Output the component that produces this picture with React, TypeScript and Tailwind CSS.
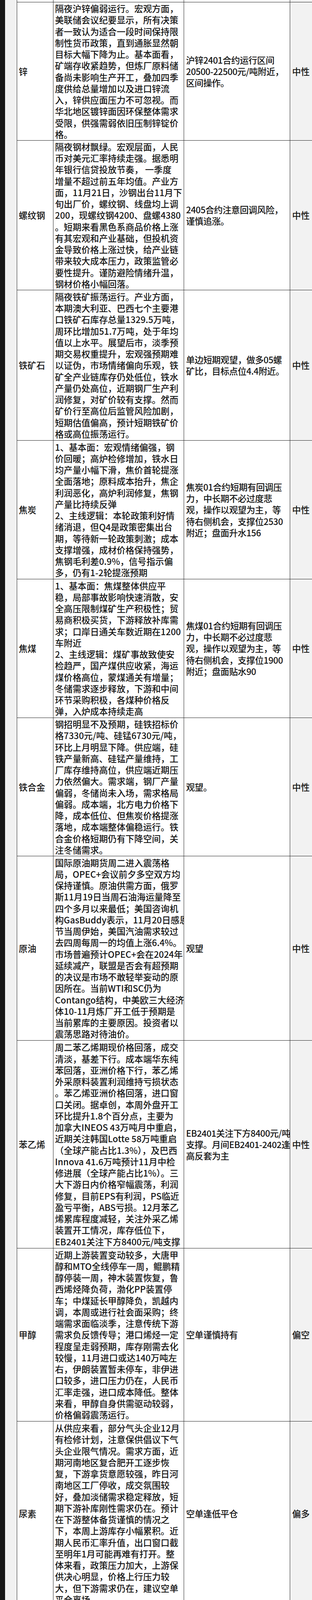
type Row = {
  name: string;
  h: string;
  analysis: string[];
  strategy: string[];
  view: string;
};

const rows: Row[] = [
  {
    name: "锌",
    h: "h-[354px]",
    analysis: [
      "隔夜沪锌偏弱运行。宏观方面，",
      "美联储会议纪要显示，所有决策",
      "者一致认为适合一段时间保持限",
      "制性货币政策，直到通胀显然朝",
      "目标大幅下降为止。基本面看，",
      "矿端存收紧趋势，但炼厂原料储",
      "备尚未影响生产开工，叠加四季",
      "度供给总量增加以及进口锌流",
      "入，锌供应面压力不可忽视。而",
      "华北地区镀锌面因环保整体需求",
      "受限，供强需弱依旧压制锌锭价",
      "格。",
    ],
    strategy: ["沪锌2401合约运行区间", "20500-22500元/吨附近，", "区间操作。"],
    view: "中性",
  },
  {
    name: "螺纹钢",
    h: "h-[383px]",
    analysis: [
      "隔夜钢材飘绿。宏观层面，人民",
      "币对美元汇率持续走强。据悉明",
      "年银行信贷投放节奏， 一季度",
      "增量不超过前五年均值。产业方",
      "面，11月21日，沙钢出台11月下",
      "旬出厂价，螺纹钢、线盘均上调",
      "200，现螺纹钢4200、盘螺4380",
      "。短期来看黑色系商品价格上涨",
      "有其宏观和产业基础，但投机资",
      "金导致价格上涨过快，给产业链",
      "带来较大成本压力，政策监管必",
      "要性提升。谨防避险情绪升温，",
      "钢材价格小幅回落。",
    ],
    strategy: ["2405合约注意回调风险，", "谨慎追涨。"],
    view: "中性",
  },
  {
    name: "铁矿石",
    h: "h-[385px]",
    analysis: [
      "隔夜铁矿振荡运行。产业方面，",
      "本期澳大利亚、巴西七个主要港",
      "口铁矿石库存总量1329.5万吨，",
      "周环比增加51.7万吨，处于年均",
      "值以上水平。展望后市，淡季预",
      "期交易权重提升，宏观强预期难",
      "以证伪，市场情绪偏向乐观，铁",
      "矿全产业链库存仍处低位，铁水",
      "产量仍处高位，近期钢厂生产利",
      "润修复，对矿价较有支撑。然而",
      "矿价行至高位后监管风险加剧，",
      "短期估值偏高，预计短期铁矿价",
      "格或高位振荡运行。",
    ],
    strategy: ["单边短期观望，做多05螺", "矿比，目标点位4.4附近。"],
    view: "中性",
  },
  {
    name: "焦炭",
    h: "h-[355px]",
    analysis: [
      "1、基本面：宏观情绪偏强，钢",
      "价回暖；高炉检修增加，铁水日",
      "均产量小幅下滑，焦价首轮提涨",
      "全面落地；原料成本抬升，焦企",
      "利润恶化，高炉利润修复，焦钢",
      "产量比持续反弹",
      "2、主线逻辑：本轮政策利好情",
      "绪消退，但Q4是政策密集出台",
      "期，等待新一轮政策刺激；成本",
      "支撑增强，成材价格保持强势，",
      "焦钢毛利差0.9%，信号指示偏",
      "多，仍有1-2轮提涨预期",
    ],
    strategy: [
      "焦炭01合约短期有回调压",
      "力，中长期不必过度悲",
      "观，操作以观望为主，等",
      "待右侧机会，支撑位2530",
      "附近；盘面升水156",
    ],
    view: "中性",
  },
  {
    name: "焦煤",
    h: "h-[355px]",
    analysis: [
      "1、基本面：焦煤整体供应平",
      "稳，局部事故影响快速消散，安",
      "全高压限制煤矿生产积极性；贸",
      "易商积极买货，下游释放补库需",
      "求；口岸日通关车数近期在1200",
      "车附近",
      "2、主线逻辑：煤矿事故致使安",
      "检趋严，国产煤供应收紧，海运",
      "煤价格高位，蒙煤通关有增量；",
      "冬储需求逐步释放，下游和中间",
      "环节采购积极，各煤种价格反",
      "弹，入炉成本持续走高",
    ],
    strategy: [
      "焦煤01合约短期有回调压",
      "力，中长期不必过度悲",
      "观，操作以观望为主，等",
      "待右侧机会，支撑位1900",
      "附近；盘面贴水90",
    ],
    view: "中性",
  },
  {
    name: "铁合金",
    h: "h-[354px]",
    analysis: [
      "钢招明显不及预期，硅铁招标价",
      "格7330元/吨、硅锰6730元/吨，",
      "环比上月明显下降。供应端，硅",
      "铁产量新高、硅锰产量维持，工",
      "厂库存维持高位，供应端近期压",
      "力依然偏大。需求端，钢厂产量",
      "偏弱，冬储尚未入场，需求格局",
      "偏弱。成本端，北方电力价格下",
      "降，成本低位、但焦炭价格提涨",
      "落地，成本端整体偏稳运行。铁",
      "合金价格短期仍有下降空间，关",
      "注冬储需求。",
    ],
    strategy: ["观望。"],
    view: "中性",
  },
  {
    name: "原油",
    h: "h-[472px]",
    analysis: [
      "国际原油期货周二进入震荡格",
      "局，OPEC+会议前夕多空双方均",
      "保持谨慎。原油供需方面，俄罗",
      "斯11月19日当周石油海运量降至",
      "四个多月以来最低；美国咨询机",
      "构GasBuddy表示，11月20日感恩",
      "节当周伊始，美国汽油需求较过",
      "去四周每周一的均值上涨6.4%。",
      "市场普遍预计OPEC+会在2024年",
      "延续减产，联盟是否会有超预期",
      "的决议是市场不敢轻举妄动的原",
      "因所在。当前WTI和SC仍为",
      "Contango结构，中美欧三大经济",
      "体10-11月炼厂开工低于预期是",
      "当前累库的主要原因。投资者以",
      "震荡思路对待油价。",
    ],
    strategy: ["观望"],
    view: "中性",
  },
  {
    name: "苯乙烯",
    h: "h-[532px]",
    analysis: [
      "周二苯乙烯期现价格回落，成交",
      "清淡，基差下行。成本端华东纯",
      "苯回落，亚洲价格下行，苯乙烯",
      "外采原料装置利润维持亏损状态",
      "。苯乙烯亚洲价格回落，进口窗",
      "口关闭。据卓创，本周外盘开工",
      "环比提升1.8个百分点，主要为",
      "加拿大INEOS 43万吨月中重启，",
      "近期关注韩国Lotte 58万吨重启",
      "（全球产能占比1.3%），及巴西",
      "Innova 41.6万吨预计11月中检",
      "修进展（全球产能占比1%）。三",
      "大下游日内价格窄幅震荡，利润",
      "修复，目前EPS有利润，PS临近",
      "盈亏平衡，ABS亏损。12月苯乙",
      "烯累库程度减轻，关注外采乙烯",
      "装置开工情况，库存低位下，",
      "EB2401关注下方8400元/吨支撑",
    ],
    strategy: ["EB2401关注下方8400元/吨", "支撑。月间EB2401-2402逢", "高反套为主"],
    view: "中性",
  },
  {
    name: "甲醇",
    h: "h-[443px]",
    analysis: [
      "近期上游装置变动较多，大唐甲",
      "醇和MTO全线停车一周，鲲鹏精",
      "醇停装一周，神木装置恢复，鲁",
      "西烯烃降负荷，渤化PP装置停",
      "车；中煤延长甲醇降负，凯越内",
      "调，本周或进行社会面采购；终",
      "端需求面临淡季，注意传统下游",
      "需求负反馈传导；港口烯烃一定",
      "程度呈走弱预期，库存刚需去化",
      "较慢，11月进口或达140万吨左",
      "右，伊朗装置暂未停车，非伊进",
      "口较多，进口压力仍在，人民币",
      "汇率走强，进口成本降低。整体",
      "来看，甲醇自身供需驱动较弱，",
      "价格偏弱震荡运行。",
    ],
    strategy: ["空单谨慎持有"],
    view: "偏空",
  },
  {
    name: "尿素",
    h: "h-[473px]",
    analysis: [
      "从供应来看，部分气头企业12月",
      "有检修计划，注意保供倡议下气",
      "头企业限气情况。需求方面，近",
      "期河南地区复合肥开工逐步恢",
      "复，下游拿货意愿较强，昨日河",
      "南地区工厂停收，成交氛围较",
      "好，叠加淡储需求稳定释放，短",
      "期下游补库刚性需求仍在。预计",
      "在下游整体备货谨慎的情况之",
      "下，本周上游库存小幅累积。近",
      "期人民币汇率升值，出口窗口截",
      "至明年1月可能再难有打开。整",
      "体来看，政策压力加大，上游保",
      "供决心明显，价格上行压力较",
      "大，但下游需求仍在，建议空单",
      "平仓离场。",
    ],
    strategy: ["空单逢低平仓"],
    view: "偏多",
  },
];

const grid = "grid grid-cols-[93px_335px_272px_100px] border-b border-[#222]";
const cell = "flex flex-col justify-center border-r border-[#222]";

function Lines({ lines }: { lines: string[] }) {
  return (
    <>
      {lines.map((line, i) => (
        <div key={i} className="h-[29.25px] whitespace-nowrap">
          {line}
        </div>
      ))}
    </>
  );
}

export default function App() {
  return (
    <div className="flex h-[4119px] w-[800px] overflow-hidden bg-[#f1f1f1] font-['Noto_Sans_CJK_SC',sans-serif] text-[22.6px] font-medium leading-[29.25px] text-[#141414]">
      <div className="w-[13px] shrink-0 bg-[#161616]" />
      <div className="ml-[30px] w-[800px] shrink-0 border-l border-[#222]">
        {/* bottom edge of the row above */}
        <div className={`${grid} h-[6px]`}>
          <div className={`${cell} bg-white`} />
          <div className={`${cell} bg-white`} />
          <div className={`${cell} bg-white`} />
          <div className={`${cell} bg-[#f2f2f2]`} />
        </div>
        {rows.map((row) => (
          <div key={row.name} className={`${grid} ${row.h}`}>
            <div className={`${cell} bg-white px-1`}>{row.name}</div>
            <div className={`${cell} bg-white px-1`}>
              <Lines lines={row.analysis} />
            </div>
            <div className={`${cell} bg-white px-[5px] tracking-[-0.5px]`}>
              <Lines lines={row.strategy} />
            </div>
            <div className={`${cell} bg-[#f2f2f2] px-[5px]`}>{row.view}</div>
          </div>
        ))}
        <div className="grid h-[20px] grid-cols-[93px_335px_272px_100px]">
          <div className={`${cell} bg-white`} />
          <div className={`${cell} bg-white`} />
          <div className={`${cell} bg-white`} />
          <div className={`${cell} bg-[#f2f2f2]`} />
        </div>
      </div>
    </div>
  );
}
